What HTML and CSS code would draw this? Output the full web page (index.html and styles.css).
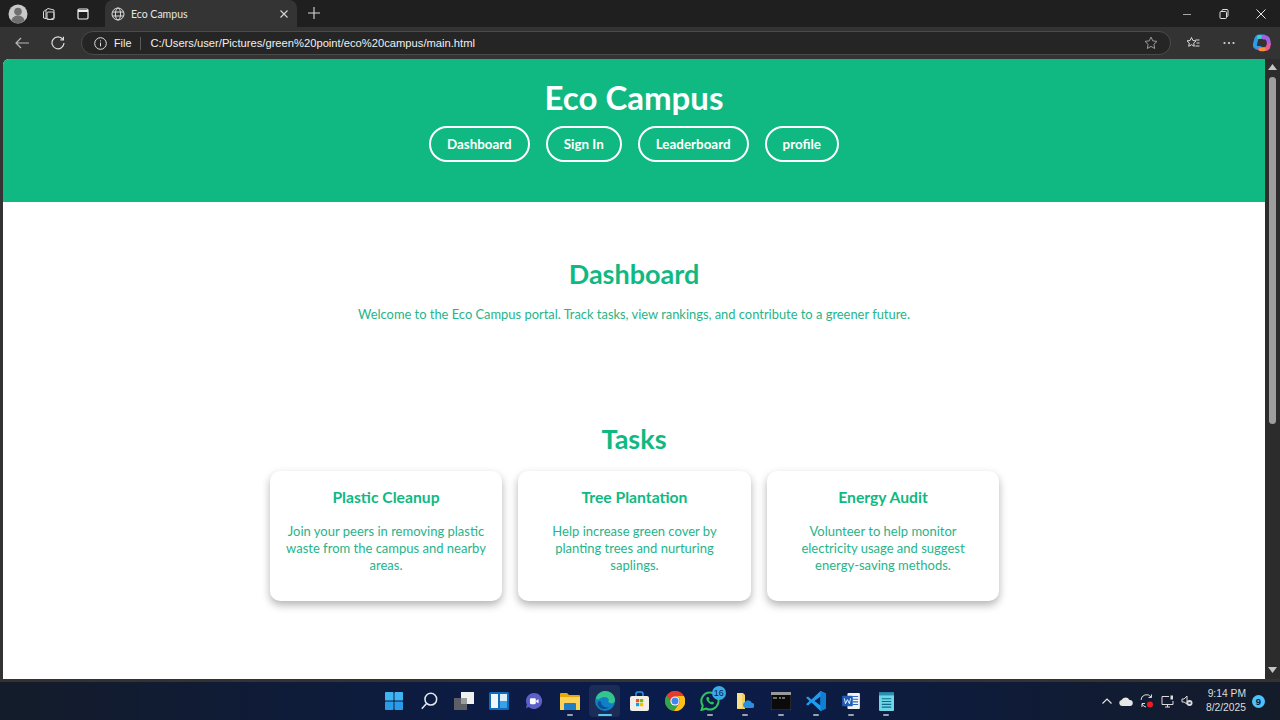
FILE: index.html
```html
<!DOCTYPE html>
<html>
<head>
  <meta charset="utf-8">
  <title>Eco Campus</title>
  <link rel="stylesheet" href="styles.css">
</head>
<body>

  <!-- browser tab strip -->
  <div class="tabstrip">
    <div class="strip-left">
      <svg class="avatar" width="20" height="20" viewBox="0 0 20 20"><circle cx="10" cy="10" r="9.5" fill="#c9c9c9"/><circle cx="10" cy="7.6" r="3.8" fill="#6f6f6f"/><path d="M3.4 16.4c1-3.6 3.6-5 6.6-5s5.600 1.400 6.600 5A9.500 9.500 0 0 1 3.400 16.400z" fill="#6f6f6f"/></svg>
      <svg class="strip-icon" width="14" height="14" viewBox="0 0 14 14" fill="none" stroke="#d8d8d8" stroke-width="1"><path d="M1.500 4.500 6 1.500l6 1.500v8l-4 1.500-6.500-1.500z"/><rect x="5" y="5" width="7" height="7.500" rx="1"/><path d="M4 3v8.500"/></svg>
      <svg class="strip-icon" width="12" height="12" viewBox="0 0 12 12" fill="none" stroke="#f0f0f0" stroke-width="1.200"><rect x="1" y="1" width="10" height="10" rx="1.200"/><path d="M1 3h10" stroke-width="2"/></svg>
    </div>
    <div class="tab">
      <svg width="14" height="14" viewBox="0 0 14 14" fill="none" stroke="#dcdcdc" stroke-width="1"><circle cx="7" cy="7" r="6"/><ellipse cx="7" cy="7" rx="2.600" ry="6"/><path d="M1.400 5h11.200M1.400 9h11.200"/></svg>
      <span class="tab-title">Eco Campus</span>
      <svg class="tab-close" width="8" height="8" viewBox="0 0 8 8" stroke="#d8d8d8" stroke-width="1.100"><path d="M.5.500l7 7M7.500.500l-7 7"/></svg>
    </div>
    <svg class="new-tab" width="12" height="12" viewBox="0 0 12 12" stroke="#d8d8d8" stroke-width="1.100"><path d="M6 0v12M0 6h12"/></svg>
    <div class="window-btns">
      <svg width="10" height="10" viewBox="0 0 10 10" stroke="#a8a8a8"><path d="M1 5.500h8"/></svg>
      <svg width="10" height="10" viewBox="0 0 10 10" fill="none" stroke="#e0e0e0"><rect x="1" y="2.500" width="6.500" height="7" rx="1"/><path d="M3 2.500V1.500a1 1 0 0 1 1-1h4a1 1 0 0 1 1 1v5a1 1 0 0 1-1 1h-.500"/></svg>
      <svg width="10" height="10" viewBox="0 0 10 10" stroke="#e8e8e8"><path d="M.500.500l9 9M9.500.500l-9 9"/></svg>
    </div>
  </div>

  <!-- browser toolbar -->
  <div class="toolbar">
    <svg class="tool-back" width="14" height="12" viewBox="0 0 14 12" fill="none" stroke="#b8b8b8" stroke-width="1.200"><path d="M14 6H1M6 1 1 6l5 5"/></svg>
    <svg class="tool-reload" width="14" height="14" viewBox="0 0 14 14" fill="none" stroke="#dedede" stroke-width="1.200"><path d="M11.800 3.200A6 6 0 1 0 13 7"/><path d="M12.400.800v3h-3"/></svg>
    <div class="addressbar">
      <svg width="13" height="13" viewBox="0 0 13 13" fill="none" stroke="#e0e0e0"><circle cx="6.500" cy="6.500" r="5.800"/><path d="M6.500 5.600v3.800M6.500 3.400v1"/></svg>
      <span class="addr-file">File</span>
      <span class="addr-sep"></span>
      <span class="addr-url">C:/Users/user/Pictures/green%20point/eco%20campus/main.html</span>
      <svg class="addr-star" width="14" height="14" viewBox="0 0 14 14" fill="none" stroke="#9a9a9a"><path d="M7 1l1.800 3.900 4.200.500-3.100 2.900.800 4.200L7 10.400l-3.700 2.100.8-4.200L1 5.400l4.200-.500z"/></svg>
    </div>
    <div class="tool-right">
      <svg width="14" height="14" viewBox="0 0 14 14" fill="none" stroke="#dcdcdc"><path d="M5.500 1.500l1.400 3 3.100.4-2.300 2.200.6 3.200-2.800-1.600-2.800 1.600.6-3.200L1 4.900l3.100-.4z"/><path d="M9.500 4h4M10.500 7h3M9.500 10h4"/></svg>
      <svg width="12" height="4" viewBox="0 0 12 4" fill="#d8d8d8"><circle cx="1.500" cy="2" r="1.100"/><circle cx="6" cy="2" r="1.100"/><circle cx="10.500" cy="2" r="1.100"/></svg>
      <svg class="copilot" width="18" height="18" viewBox="0 0 18 18" fill="none" stroke-linecap="round">
        <path d="M11 2.500H6.500C4.500 2.500 3.500 4 3 6L2 10c-.5 2 .5 4 3 4h2" stroke="#2f9be8" stroke-width="4"/>
        <path d="M6 3h1.500" stroke="#3cd0c0" stroke-width="4"/>
        <path d="M10.500 3.500h1.500c2 0 3.200 1.500 3.500 3.500l.5 3" stroke="#a65fe4" stroke-width="4"/>
        <path d="M15.500 11c0 2.500-1.500 4-4 4H7" stroke="#ee5a8c" stroke-width="4"/>
        <path d="M7.500 15.500H11" stroke="#f4913a" stroke-width="3.500"/>
      </svg>
    </div>
  </div>

  <!-- page viewport with its scrollbar -->
  <div class="viewport">
    <div class="page">
      <header class="site-header">
        <h1>Eco Campus</h1>
        <nav class="site-nav">
          <a class="nav-pill">Dashboard</a>
          <a class="nav-pill">Sign In</a>
          <a class="nav-pill">Leaderboard</a>
          <a class="nav-pill">profile</a>
        </nav>
      </header>

      <section class="intro">
        <h2>Dashboard</h2>
        <p>Welcome to the Eco Campus portal. Track tasks, view rankings, and contribute to a greener future.</p>
      </section>

      <section class="tasks">
        <h2>Tasks</h2>
        <div class="task-row">
          <div class="task-card">
            <h3>Plastic Cleanup</h3>
            <p>Join your peers in removing plastic waste from the campus and nearby areas.</p>
          </div>
          <div class="task-card">
            <h3>Tree Plantation</h3>
            <p>Help increase green cover by planting trees and nurturing saplings.</p>
          </div>
          <div class="task-card">
            <h3>Energy Audit</h3>
            <p>Volunteer to help monitor electricity usage and suggest energy-saving methods.</p>
          </div>
        </div>
      </section>
    </div>
    <div class="scrollbar">
      <svg width="9" height="6" viewBox="0 0 9 6" fill="#c4c4c4"><path d="M4.500 0 9 6H0z"/></svg>
      <div class="scroll-track"><div class="scroll-thumb"></div></div>
      <svg width="9" height="6" viewBox="0 0 9 6" fill="#c4c4c4"><path d="M4.500 6 9 0H0z"/></svg>
    </div>
  </div>

  <!-- windows taskbar -->
  <footer class="taskbar">
    <div class="task-icons">
      <span class="tb-icon">
        <svg width="18" height="18" viewBox="0 0 20 20" fill="#3fb4f2"><rect x="0" y="0" width="9.500" height="9.500" rx="1"/><rect x="10.500" y="0" width="9.500" height="9.500" rx="1"/><rect x="0" y="10.500" width="9.500" height="9.500" rx="1" fill="#2a9be6"/><rect x="10.500" y="10.500" width="9.500" height="9.500" rx="1" fill="#2a9be6"/></svg>
      </span>
      <span class="tb-icon">
        <svg width="18" height="18" viewBox="0 0 20 20" fill="none" stroke="#e4e8f0" stroke-width="1.700"><circle cx="12" cy="8" r="6.500"/><path d="M7 13 2 18.500"/></svg>
      </span>
      <span class="tb-icon">
        <svg width="20" height="18" viewBox="0 0 20 18"><rect x="0" y="6" width="13" height="12" fill="#5c5f66"/><rect x="7" y="0" width="13" height="12" fill="#f0f0f0"/><rect x="7" y="6" width="6" height="6" fill="#9a9c9f"/></svg>
      </span>
      <span class="tb-icon">
        <svg width="20" height="18" viewBox="0 0 20 18"><rect width="20" height="18" rx="1.500" fill="#0f6cbd"/><rect x="2" y="2" width="7" height="14" fill="#f2f6fa"/><rect x="11" y="2" width="7" height="7" fill="#dcecf8"/><rect x="11" y="9" width="7" height="7" fill="#37a2ea"/></svg>
      </span>
      <span class="tb-icon">
        <svg width="18" height="18" viewBox="0 0 20 20"><path d="M10 1a9 9 0 1 1-6 15.700L1 18l1-4A9 9 0 0 1 10 1z" fill="#5b5fc7"/><rect x="5.500" y="7" width="6.500" height="6.500" rx="1.200" fill="#fff"/><path d="M12.500 9.500l2.500-1.500v4.500l-2.500-1.500z" fill="#fff"/></svg>
      </span>
      <span class="tb-icon tb-open">
        <svg width="20" height="18" viewBox="0 0 20 18"><path d="M0 2a1 1 0 0 1 1-1h6l2 2h10a1 1 0 0 1 1 1v13H0z" fill="#e8a80c"/><rect x="0" y="5" width="20" height="13" fill="#fbd35a"/><path d="M5 11h10a1 1 0 0 1 1 1v6H4v-6a1 1 0 0 1 1-1z" fill="#1e7fc4"/></svg>
      </span>
      <span class="tb-icon tb-active">
        <svg width="20" height="20" viewBox="0 0 20 20"><circle cx="10" cy="10" r="10" fill="#0f7fc8"/><path d="M1 7C3 2 7 0 10 0c6 0 10 4 10 9 0 3-3 4-5 3-2-.5-2-2-1-3-1-3-5-4-8-2-2 1-4 3-5 0z" fill="#35c48d"/><path d="M6 11c0 4 4 6 8 5-3 3-9 3-11-2-1-2 1-5 3-3z" fill="#0b4f94"/></svg>
      </span>
      <span class="tb-icon">
        <svg width="19" height="20" viewBox="0 0 19 20"><path d="M6 5V3a2 2 0 0 1 2-2h3a2 2 0 0 1 2 2v2" fill="none" stroke="#2a9be6" stroke-width="1.500"/><rect x="0" y="5" width="19" height="15" rx="2" fill="#f2efe9"/><rect x="6" y="8" width="3.200" height="3.200" fill="#f25022"/><rect x="10" y="8" width="3.200" height="3.200" fill="#7fba00"/><rect x="6" y="12" width="3.200" height="3.200" fill="#00a4ef"/><rect x="10" y="12" width="3.200" height="3.200" fill="#ffb900"/></svg>
      </span>
      <span class="tb-icon">
        <svg width="20" height="20" viewBox="0 0 20 20"><circle cx="10" cy="10" r="10" fill="#e33b2e"/><path d="M10 5h8.900A10 10 0 0 0 1.800 4.300L6 11a4.500 4.500 0 0 1 4-6z" fill="#e33b2e"/><path d="M1.800 4.300A10 10 0 0 0 9 20l4-6.500a5 5 0 0 1-7-2.500z" fill="#30a64a"/><path d="M18.900 5H10a5 5 0 0 1 3.500 8.500L9 20A10 10 0 0 0 18.900 5z" fill="#fbc116"/><circle cx="10" cy="10" r="4.600" fill="#fff"/><circle cx="10" cy="10" r="3.500" fill="#3f86ee"/></svg>
      </span>
      <span class="tb-icon tb-running">
        <svg width="20" height="20" viewBox="0 0 20 20" fill="none"><path d="M10 1.500a8.500 8.500 0 1 1-4 16L1.500 19l1.300-4.300A8.500 8.500 0 0 1 10 1.500z" stroke="#2dc55a" stroke-width="2"/><path d="M7 6c-1 1-1 3 1 5s4 3 5.500 2l.500-1.500-2-1-1 .800c-1-.500-2-1.500-2.300-2.300l.800-1-1-2z" fill="#2dc55a"/></svg>
        <span class="tb-badge">16</span>
      </span>
      <span class="tb-icon tb-running">
        <svg width="18" height="20" viewBox="0 0 18 20"><path d="M1 2h6l2 2v14H1z" fill="#f2d25f"/><path d="M1 2h5v15H1z" fill="#f7e08a"/><path d="M8 16a3 3 0 0 1 1-5 4 4 0 0 1 7 1 2.500 2.500 0 0 1 0 5H9z" fill="#2a8fdc"/></svg>
      </span>
      <span class="tb-icon tb-running">
        <svg width="20" height="18" viewBox="0 0 20 18"><rect width="20" height="18" rx="1" fill="#0b0b0b" stroke="#6a6a6a" stroke-width=".6"/><rect x="0" y="0" width="20" height="3" fill="#9a9a9a"/><path d="M2 6h4M8 6h2M11 6h3" stroke="#cfcfcf" stroke-width="1.200"/></svg>
      </span>
      <span class="tb-icon tb-running">
        <svg width="20" height="20" viewBox="0 0 20 20"><path d="M14.500 0 20 2.500v15L14.500 20 5.500 11.500l-3.500 3L0 13.200 3.500 10 0 6.800 2 5.500l3.500 3z" fill="#1f9cf0"/><path d="M14.500 5.500 8.500 10l6 4.500z" fill="#0a2050"/><path d="M14.500 0 20 2.500v15L14.500 20z" fill="#0f7fd4"/></svg>
      </span>
      <span class="tb-icon tb-running">
        <svg width="18" height="16" viewBox="0 0 20 18"><rect x="6" y="0" width="14" height="18" rx="1" fill="#f2f2f2"/><path d="M12 4h6M12 7h6M12 10h6M12 13h6" stroke="#2b6cc4" stroke-width="1.200"/><rect x="0" y="3" width="12" height="12" rx="1" fill="#1c5bb8"/><path d="M2.500 6l1.300 6 2.200-4.500L8.200 12l1.300-6" fill="none" stroke="#fff" stroke-width="1"/></svg>
      </span>
      <span class="tb-icon tb-running">
        <svg width="15" height="19" viewBox="0 0 16 20"><rect x="0" y="1" width="16" height="19" rx="1" fill="#6fd6e6"/><rect x="0" y="0" width="16" height="3.500" fill="#2a8fb0"/><path d="M3 7h10M3 10h10M3 13h10M3 16h10" stroke="#0c6c8c" stroke-width="1.200"/></svg>
      </span>
    </div>
    <div class="tray">
      <svg width="10" height="6" viewBox="0 0 10 6" fill="none" stroke="#e8e8e8" stroke-width="1.100"><path d="M.5 5.500 5 1l4.500 4.500"/></svg>
      <svg width="14" height="9" viewBox="0 0 14 9" fill="#e6e6e6"><path d="M3 9a3 3 0 0 1-.5-5.900A4.500 4.500 0 0 1 10.500 3 3 3 0 0 1 11 9z"/></svg>
      <svg class="tray-sync" width="14" height="14" viewBox="0 0 14 14" fill="none" stroke="#dcdcdc"><path d="M1 6a5.500 5.500 0 0 1 10-3M11.500.500V3.500H8.500M2 9.500V13M2 9.500h3M2 10a5.500 5.500 0 0 0 4 3"/><circle cx="10" cy="10.500" r="3" fill="#f01c24" stroke="none"/></svg>
      <svg width="13" height="13" viewBox="0 0 13 13" fill="none" stroke="#dcdcdc"><path d="M8 1.500H1v8h11V6"/><path d="M4 12h5M6.500 9.500V12"/><rect x="9.500" y=".5" width="2.500" height="4" fill="#dcdcdc" stroke="none"/></svg>
      <svg width="12" height="12" viewBox="0 0 12 12" fill="none" stroke="#dcdcdc"><path d="M1 4h2l3-3v8L3 7H1z"/><circle cx="8.500" cy="8" r="3" fill="#dcdcdc" stroke="none"/><path d="M7.500 7l2 2M9.500 7l-2 2" stroke="#1a2230"/></svg>
      <div class="clock"><span>9:14 PM</span><span>8/2/2025</span></div>
      <span class="notify">9</span>
    </div>
  </footer>

</body>
</html>
```
FILE: styles.css
```css
body { margin: 0; height: 720px; width: 1280px; overflow: hidden; display: flex; flex-direction: column;
       background: #2f2f2f; font-family: "Lato", "Noto Sans", sans-serif; }

h1, h2, h3, p { margin: 0; }

/* browser chrome */
.tabstrip { height: 27px; flex: none; display: flex; align-items: flex-end; background: #1f1f1f; }
.strip-left { width: 105px; height: 27px; flex: none; display: flex; align-items: center; gap: 0; padding-left: 8px; box-sizing: border-box; }
.strip-icon { margin-left: 14px; }
.strip-left .strip-icon + .strip-icon { margin-left: 21px; }

.tab { width: 192px; height: 27px; box-sizing: border-box; padding: 0 9px 0 6px; display: flex; align-items: center; gap: 6px;
       background: #343434; border-radius: 8px 8px 0 0; color: #e6e6e6; }
.tab-title { flex: 1; font-size: 10.500px; }
.new-tab { margin: 0 0 8px 11px; }

.window-btns { margin-left: auto; height: 27px; display: flex; align-items: center; gap: 27px; padding-right: 14px; }

.toolbar { height: 32px; flex: none; display: flex; align-items: center; background: #333333; position: relative; }
.tool-back { margin-left: 15px; }
.tool-reload { margin-left: 22px; }
.addressbar { margin-left: 16px; width: 1090px; height: 24px; box-sizing: border-box; display: flex; align-items: center;
              background: #252525; border: 1px solid #4b4b4b; border-radius: 12px; padding: 0 12px; color: #f0f0f0;
              font-family: "Liberation Sans", sans-serif; font-size: 11.200px; }
.addr-file { margin-left: 7px; font-size: 10.800px; }
.addr-sep { width: 1px; height: 13px; background: #5a5a5a; margin: 0 9px 0 9px; }
.addr-star { margin-left: auto; }
.tool-right { flex: 1; display: flex; align-items: center; padding-left: 15px; gap: 23px; }
.copilot { margin-left: -5px; }

/* page */
.viewport { height: 623px; flex: none; display: flex; box-sizing: border-box; padding: 0 0 3px 3px; background: #333333; }
.page { width: 1262px; height: 620px; overflow: hidden; background: #ffffff; border-radius: 6px 0 0 0; text-align: center; color: #10b981; }

.site-header { height: 143px; box-sizing: border-box; padding-top: 18px; background: #10b981; color: #ffffff; }
.site-header h1 { font-size: 33px; line-height: 40px; font-weight: 700; }
.site-nav { margin-top: 9px; display: flex; justify-content: center; gap: 16px; }
.nav-pill { height: 36px; box-sizing: border-box; padding: 0 16px; display: flex; align-items: center; border: 2px solid #ffffff;
            border-radius: 18px; font-size: 13.400px; font-weight: 700; }

.intro { padding-top: 56px; }
.intro h2, .tasks h2 { font-size: 27px; line-height: 32px; font-weight: 700; }
.intro p { margin-top: 14px; font-size: 12.900px; line-height: 20px; color: #26b48a; }

.tasks { padding-top: 99px; }
.task-row { margin-top: 16px; padding-left: 1px; display: flex; justify-content: center; gap: 16px; }
.task-card { width: 232.500px; height: 130px; box-sizing: border-box; padding: 16px; background: #ffffff; border-radius: 10px;
             box-shadow: 0 4px 8px rgba(0, 0, 0, 0.3); }
.task-card h3 { font-size: 15.700px; line-height: 20px; font-weight: 700; }
.task-card p { margin-top: 16px; font-size: 13px; line-height: 17px; color: #26b48a; }

/* scrollbar */
.scrollbar { width: 15px; flex: none; display: flex; flex-direction: column; align-items: center; padding: 5px 0 6px; box-sizing: border-box; background: #2c2c2c; }
.scroll-track { flex: 1; width: 100%; padding: 7px 0; box-sizing: border-box; }
.scroll-thumb { width: 7px; height: 347px; margin: 0 auto; border-radius: 4px; background: #9e9e9e; }

/* taskbar */
.taskbar { height: 38px; flex: none; display: flex; align-items: center; position: relative;
           background: linear-gradient(90deg, #141c2a 0%, #0e1b3a 25%, #0a1c4c 50%, #0e1b3a 75%, #141c2a 100%); }
.task-icons { margin-left: 376px; display: flex; }
.tb-icon { width: 35.200px; height: 36px; position: relative; display: flex; align-items: center; justify-content: center; }
.tb-active::before { content: ""; position: absolute; inset: 2px 2px 2px 2px; background: rgba(255, 255, 255, 0.07); border-radius: 4px; }
.tb-active svg { position: relative; }
.tb-active::after, .tb-open::after, .tb-running::after { content: ""; position: absolute; bottom: 3px; left: 50%; height: 2px; border-radius: 1px; }
.tb-active::after { width: 14px; margin-left: -7px; background: #58c4f5; }
.tb-open::after, .tb-running::after { width: 6px; margin-left: -3px; background: #9aa2b0; }
.tb-badge { position: absolute; top: 3px; right: 2px; width: 14px; height: 14px; border-radius: 50%; background: #3aa9e8; color: #0a1c3c;
            font-family: "Liberation Sans", sans-serif; font-size: 9px; line-height: 14px; text-align: center; }

.tray { margin-left: auto; display: flex; align-items: center; gap: 7px; padding-right: 15px; color: #e8e8e8; }
.clock { margin-left: 6px; display: flex; flex-direction: column; align-items: flex-end; font-family: "Liberation Sans", sans-serif; font-size: 10.300px; line-height: 14px; color: #dcdcdc; }
.notify { margin-left: -1px; width: 13px; height: 13px; border-radius: 50%; background: #4cc2ff; color: #0c1a2c;
          font-family: "Liberation Sans", sans-serif; font-size: 9.500px; font-weight: 700; line-height: 13px; text-align: center; }
```
